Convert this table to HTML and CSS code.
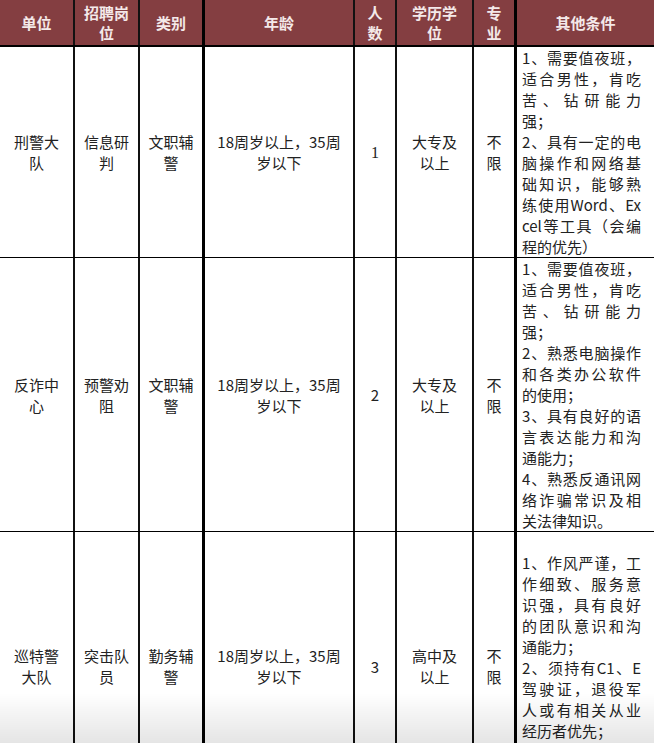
FILE: index.html
```html
<!DOCTYPE html>
<html lang="zh-CN">
<head>
<meta charset="utf-8">
<title>招聘岗位</title>
<link rel="stylesheet" href="styles.css">
</head>
<body>
<div class="sheet">
  <div class="row head">
    <div class="c">单位</div>
    <div class="c">招聘岗位</div>
    <div class="c">类别</div>
    <div class="c thick">年龄</div>
    <div class="c">人数</div>
    <div class="c">学历学位</div>
    <div class="c">专业</div>
    <div class="c thick">其他条件</div>
  </div>
  <div class="row">
    <div class="c">刑警大队</div>
    <div class="c">信息研判</div>
    <div class="c">文职辅警</div>
    <div class="c thick">18周岁以上，35周岁以下</div>
    <div class="c serif">1</div>
    <div class="c">大专及以上</div>
    <div class="c">不限</div>
    <div class="c thick cond">
      <p>1、需要值夜班，适合男性，肯吃苦、钻研能力强；</p>
      <p>2、具有一定的电脑操作和网络基础知识，能够熟练使用Word、Excel等工具（会编程的优先）</p>
    </div>
  </div>
  <div class="row">
    <div class="c">反诈中心</div>
    <div class="c">预警劝阻</div>
    <div class="c">文职辅警</div>
    <div class="c thick">18周岁以上，35周岁以下</div>
    <div class="c">2</div>
    <div class="c">大专及以上</div>
    <div class="c">不限</div>
    <div class="c thick cond">
      <p>1、需要值夜班，适合男性，肯吃苦、钻研能力强；</p>
      <p>2、熟悉电脑操作和各类办公软件的使用；</p>
      <p>3、具有良好的语言表达能力和沟通能力；</p>
      <p>4、熟悉反通讯网络诈骗常识及相关法律知识。</p>
    </div>
  </div>
  <div class="row">
    <div class="c">巡特警大队</div>
    <div class="c">突击队员</div>
    <div class="c">勤务辅警</div>
    <div class="c thick">18周岁以上，35周岁以下</div>
    <div class="c">3</div>
    <div class="c">高中及以上</div>
    <div class="c">不限</div>
    <div class="c thick cond cond-last">
      <p>1、作风严谨，工作细致、服务意识强，具有良好的团队意识和沟通能力；</p>
      <p>2、须持有C1、E驾驶证，退役军人或有相关从业经历者优先；</p>
    </div>
  </div>
</div>
<div class="fade"></div>
</body>
</html>
```

FILE: styles.css
```css
html, body {
  margin: 0;
  padding: 0;
  background: #fff;
}
body {
  width: 654px;
  height: 743px;
  overflow: hidden;
  font-family: "Noto Sans CJK SC", "Noto Sans", sans-serif;
  font-size: 15px;
  color: #222;
}
.sheet {
  width: 654px;
}
.row {
  display: grid;
  grid-template-columns: 73px 65px 64px 151px 42px 77px 42px 140px;
  border-bottom: 1px solid #000;
}
.c {
  box-sizing: border-box;
  display: flex;
  flex-direction: column;
  justify-content: center;
  text-align: center;
  padding: 0 8px;
  line-height: 21px;
  border-left: 2px solid #111;
}
.c:first-child {
  border-left: none;
}
.c.thick {
  border-left: 3px solid #000;
}
.head {
  background: #843e41;
  height: 45px;
  border-bottom: 2px solid #000;
}
.head .c {
  color: #f4e9e9;
  font-weight: 700;
  line-height: 20px;
  padding: 0 9px;
}
.serif {
  font-family: "Liberation Serif", serif;
  font-size: 16px;
}
.cond {
  text-align: justify;
  padding: 0 13px 0 5px;
  word-break: break-all;
}
.cond p {
  margin: 0;
}
.cond-last {
  justify-content: flex-start;
  padding-top: 20px;
  padding-bottom: 59px;
}
.fade {
  position: fixed;
  left: 0;
  right: 0;
  bottom: 0;
  height: 50px;
  pointer-events: none;
  background: linear-gradient(to bottom, rgba(0,0,0,0), rgba(0,0,0,0.1));
}
```
